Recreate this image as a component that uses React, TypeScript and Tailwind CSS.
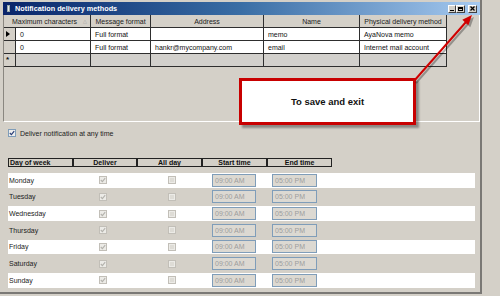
import React from "react";

const gridCols = [
  { w: 60, label: "Message format" },
  { w: 113, label: "Address" },
  { w: 96, label: "Name" },
  { w: 87, label: "Physical delivery method" },
];

const gridRows = [
  ["0", "Full format", "", "memo", "AyaNova memo"],
  ["0", "Full format", "hankr@mycompany.com", "email", "Internet mail account"],
];

const days = ["Monday", "Tuesday", "Wednesday", "Thursday", "Friday", "Saturday", "Sunday"];

function DisabledCheck({ checked }: { checked: boolean }) {
  return (
    <div className="w-[8px] h-[8px] border border-[#c2bfb8] bg-[#ecebe7] flex items-center justify-center">
      {checked ? (
        <svg width="6" height="6" viewBox="0 0 6 6">
          <path d="M0.8 3 L2.4 4.6 L5.2 1.2" stroke="#b4b2ad" strokeWidth="1.1" fill="none" />
        </svg>
      ) : (
        <div className="w-[4px] h-[4px] bg-[#dedcd6]" />
      )}
    </div>
  );
}

function TimeBox({ text, w }: { text: string; w: number }) {
  return (
    <div
      className="h-[13px] border border-[#7f9db9] bg-[#dcd9d2] flex items-center pl-[2px] text-[#9d9d9d]"
      style={{ width: w }}
    >
      {text}
    </div>
  );
}

export default function App() {
  return (
    <div className="w-[500px] h-[296px] bg-[#d4d0c8] relative overflow-hidden font-['Liberation_Sans',Arial,sans-serif] text-[7px] leading-none text-[#111]">
      <div className="w-[482px] h-[294px] pt-[2px] pl-[3px] border-r-2 border-b-2 border-[#7a7875] flex flex-col">
        {/* Title bar */}
        <div className="h-[13px] w-[477px] bg-gradient-to-r from-[#0a246a] via-[#3a6ea5] to-[#a6caf0] flex items-center">
          <div className="ml-[4px] w-[3px] h-[7px] bg-[#e8e8f0] border border-[#9aa]" />
          <span className="ml-[5px] text-white font-bold text-[7.3px]">Notification delivery methods</span>
          <div className="ml-auto mr-[3px] flex items-center">
            <div className="w-[8px] h-[8px] bg-[#d4d0c8] border border-t-white border-l-white border-r-[#404040] border-b-[#404040] flex items-end justify-center pb-[1px]">
              <div className="w-[4px] h-[1px] bg-black" />
            </div>
            <div className="w-[9px] h-[8px] bg-[#d4d0c8] border border-t-white border-l-white border-r-[#404040] border-b-[#404040] flex items-center justify-center">
              <div className="w-[5px] h-[4px] border border-black border-t-2" />
            </div>
            <div className="ml-[3px] w-[9px] h-[8px] bg-[#d4d0c8] border border-t-white border-l-white border-r-[#404040] border-b-[#404040] flex items-center justify-center">
              <svg width="5" height="5" viewBox="0 0 5 5">
                <path d="M0.5 0.5 L4.5 4.5 M4.5 0.5 L0.5 4.5" stroke="black" strokeWidth="1.3" />
              </svg>
            </div>
          </div>
        </div>

        {/* Grid panel */}
        <div className="h-[107px] w-[477px] border-l border-l-[#8a8780] border-r border-r-white border-b border-b-white">
          <div className="flex flex-col w-[443px]">
            {/* header */}
            <div className="flex h-[13px] border-b border-[#2e2e2e]">
              <div className="w-[87px] border-r border-[#2e2e2e] flex items-center pl-[8px] text-[#222]">
                <span>Maximum characters</span>
                <span className="ml-auto mr-[3px] text-[5px] text-[#999]">△</span>
              </div>
              {gridCols.map((c) => (
                <div
                  key={c.label}
                  className="border-r border-[#2e2e2e] flex items-center justify-center text-[#222]"
                  style={{ width: c.w }}
                >
                  {c.label}
                </div>
              ))}
            </div>
            {gridRows.map((r, i) => (
              <div key={i} className="flex h-[13px] border-b border-[#2e2e2e]">
                <div className="w-[12px] border-r border-[#2e2e2e] bg-[#d4d0c8] flex items-center pl-[2px]">
                  {i === 0 && (
                    <svg width="4" height="6" viewBox="0 0 4 6">
                      <path d="M0 0 L4 3 L0 6 Z" fill="black" />
                    </svg>
                  )}
                </div>
                <div className="w-[75px] border-r border-[#2e2e2e] bg-white flex items-center pl-[4px]">{r[0]}</div>
                {gridCols.map((c, j) => (
                  <div
                    key={j}
                    className="border-r border-[#2e2e2e] bg-white flex items-center pl-[4px]"
                    style={{ width: c.w }}
                  >
                    {r[j + 1]}
                  </div>
                ))}
              </div>
            ))}
            <div className="flex h-[13px] border-b border-[#2e2e2e]">
              <div className="w-[12px] border-r border-[#2e2e2e] bg-[#d4d0c8] flex items-center pl-[2px] text-[8px] font-bold">
                *
              </div>
              <div className="w-[75px] border-r border-[#2e2e2e] bg-[#d2d0cc]" />
              {gridCols.map((c, j) => (
                <div key={j} className="border-r border-[#2e2e2e] bg-[#d2d0cc]" style={{ width: c.w }} />
              ))}
            </div>
          </div>
        </div>

        {/* Options */}
        <div className="flex items-center mt-[7px] ml-[5px]">
          <div className="w-[8px] h-[8px] border border-[#7f9db9] bg-[#eeeeee] flex items-center justify-center">
            <svg width="6" height="6" viewBox="0 0 6 6">
              <path d="M0.8 3 L2.4 4.6 L5.2 1.2" stroke="#2a3f78" strokeWidth="1.2" fill="none" />
            </svg>
          </div>
          <span className="ml-[4px] text-[#222]">Deliver notification at any time</span>
        </div>

        {/* Schedule header */}
        <div className="flex ml-[5px] mt-[21px] h-[9px] font-bold text-[#111]">
          <div className="w-[65px] border border-[#222] bg-[#d4d0c8] flex items-center pl-[1px]">Day of week</div>
          <div className="w-[64px] border border-[#222] bg-[#d4d0c8] flex items-center justify-center">Deliver</div>
          <div className="w-[65px] border border-[#222] bg-[#d4d0c8] flex items-center justify-center">All day</div>
          <div className="w-[65px] border border-[#222] bg-[#d4d0c8] flex items-center justify-center">Start time</div>
          <div className="w-[65px] border border-[#222] bg-[#d4d0c8] flex items-center justify-center">End time</div>
        </div>

        {/* Schedule rows */}
        <div className="flex flex-col gap-[2px] ml-[5px] mt-[6px] w-[467px]">
          {days.map((d, i) => (
            <div
              key={d}
              className={`flex items-center h-[14.67px] ${i % 2 === 0 ? "bg-white" : ""}`}
            >
              <div className="w-[91px] pl-[1px] text-[#222]">{d}</div>
              <DisabledCheck checked={true} />
              <div className="w-[61px]" />
              <DisabledCheck checked={false} />
              <div className="w-[36px]" />
              <TimeBox text="09:00 AM" w={44} />
              <div className="w-[16px]" />
              <TimeBox text="05:00 PM" w={45} />
            </div>
          ))}
        </div>
      </div>

      {/* Callout */}
      <div className="absolute left-[239px] top-[78px] w-[177px] h-[47px] bg-white border-[3px] border-[#c80000] shadow-[3px_3px_2px_rgba(0,0,0,0.35)] flex items-center justify-center">
        <span className="font-bold text-[9.5px] text-[#111]">To save and exit</span>
      </div>

      {/* Arrow */}
      <svg className="absolute left-0 top-0 pointer-events-none" width="500" height="296" viewBox="0 0 500 296">
        <g transform="translate(2,2)" opacity="0.3">
          <line x1="414" y1="81" x2="466" y2="22" stroke="black" strokeWidth="2" />
          <path d="M472 15 L468.3 25.2 L462.3 19.8 Z" fill="black" />
        </g>
        <line x1="414" y1="81" x2="466" y2="22" stroke="#d00000" strokeWidth="2" />
        <path d="M472 15 L468.3 25.2 L462.3 19.8 Z" fill="#d00000" />
      </svg>
    </div>
  );
}
